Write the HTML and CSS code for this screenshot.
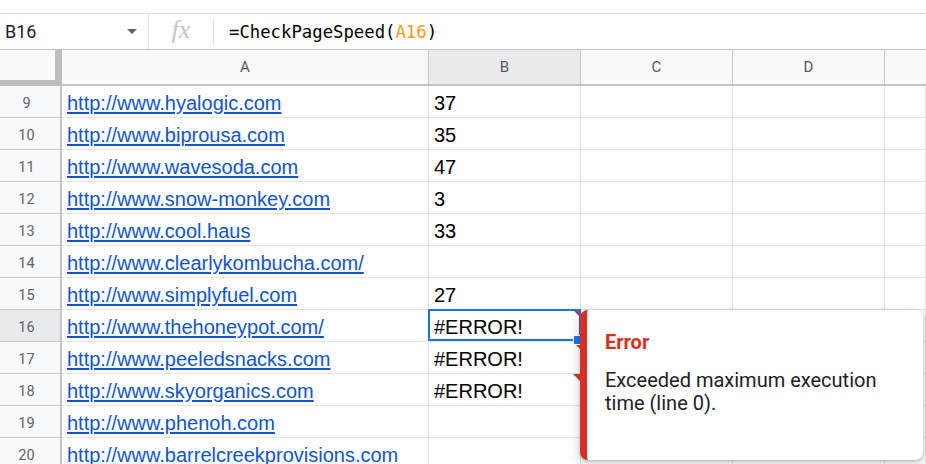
FILE: index.html
```html
<!DOCTYPE html>
<html lang="en">
<head>
    <meta charset="UTF-8">
    <title>Sheet</title>
    <link rel="stylesheet" href="styles.css">
</head>
<body>
    <div class="top-strip"></div>

    <div class="formula-bar">
        <div class="name-box">
            <span class="cell-ref">B16</span>
            <span class="caret"></span>
        </div>
        <div class="fx-box"><span class="fx">fx</span></div>
        <div class="formula">=CheckPageSpeed(<span class="ref">A16</span>)</div>
    </div>

    <div class="sheet">
        <div class="hdr corner"></div>
        <div class="hdr">A</div>
        <div class="hdr active">B</div>
        <div class="hdr">C</div>
        <div class="hdr">D</div>
        <div class="hdr last"></div>

        <div class="rownum">9</div>
        <div class="cell"><a href="#">http://www.hyalogic.com</a></div>
        <div class="cell">37</div><div class="cell"></div><div class="cell"></div><div class="cell"></div>

        <div class="rownum">10</div>
        <div class="cell"><a href="#">http://www.biprousa.com</a></div>
        <div class="cell">35</div><div class="cell"></div><div class="cell"></div><div class="cell"></div>

        <div class="rownum">11</div>
        <div class="cell"><a href="#">http://www.wavesoda.com</a></div>
        <div class="cell">47</div><div class="cell"></div><div class="cell"></div><div class="cell"></div>

        <div class="rownum">12</div>
        <div class="cell"><a href="#">http://www.snow-monkey.com</a></div>
        <div class="cell">3</div><div class="cell"></div><div class="cell"></div><div class="cell"></div>

        <div class="rownum">13</div>
        <div class="cell"><a href="#">http://www.cool.haus</a></div>
        <div class="cell">33</div><div class="cell"></div><div class="cell"></div><div class="cell"></div>

        <div class="rownum">14</div>
        <div class="cell"><a href="#">http://www.clearlykombucha.com/</a></div>
        <div class="cell"></div><div class="cell"></div><div class="cell"></div><div class="cell"></div>

        <div class="rownum">15</div>
        <div class="cell"><a href="#">http://www.simplyfuel.com</a></div>
        <div class="cell">27</div><div class="cell"></div><div class="cell"></div><div class="cell"></div>

        <div class="rownum active">16</div>
        <div class="cell"><a href="#">http://www.thehoneypot.com/</a></div>
        <div class="cell error selected">#ERROR!<span class="fill-handle"></span></div>
        <div class="cell"></div><div class="cell"></div><div class="cell"></div>

        <div class="rownum">17</div>
        <div class="cell"><a href="#">http://www.peeledsnacks.com</a></div>
        <div class="cell error">#ERROR!</div>
        <div class="cell"></div><div class="cell"></div><div class="cell"></div>

        <div class="rownum">18</div>
        <div class="cell"><a href="#">http://www.skyorganics.com</a></div>
        <div class="cell error">#ERROR!</div>
        <div class="cell"></div><div class="cell"></div><div class="cell"></div>

        <div class="rownum">19</div>
        <div class="cell"><a href="#">http://www.phenoh.com</a></div>
        <div class="cell"></div><div class="cell"></div><div class="cell"></div><div class="cell"></div>

        <div class="rownum">20</div>
        <div class="cell"><a href="#">http://www.barrelcreekprovisions.com</a></div>
        <div class="cell"></div><div class="cell"></div><div class="cell"></div><div class="cell"></div>

        <!-- error tooltip for B16 -->
        <div class="error-popup">
            <div class="error-title">Error</div>
            <div class="error-msg">Exceeded maximum execution time (line 0).</div>
        </div>
    </div>
</body>
</html>
```
FILE: styles.css
```css
* {
    box-sizing: border-box;
    margin: 0;
    padding: 0;
}

html, body {
    height: 100%;
    overflow: hidden;
    background: #ffffff;
    font-family: 'Roboto', 'Liberation Sans', sans-serif;
    color: #202124;
}

.top-strip {
    height: 14px;
    border-bottom: 1px solid #e0e0e0;
}

/* Formula bar */
.formula-bar {
    display: flex;
    align-items: center;
    height: 36px;
    border-bottom: 1px solid #c4c4c4;
}

.name-box {
    display: flex;
    align-items: center;
    justify-content: space-between;
    width: 149px;
    height: 100%;
    padding: 0 11px 0 5px;
    border-right: 1px solid #e3e3e3;
}

.cell-ref {
    font-size: 18px;
    color: #202124;
}

.caret {
    width: 0;
    height: 0;
    border-left: 5px solid transparent;
    border-right: 5px solid transparent;
    border-top: 5px solid #5f6368;
}

.fx-box {
    display: flex;
    align-items: center;
    justify-content: center;
    width: 65px;
    height: 24px;
    border-right: 1px solid #dadce0;
}

.fx {
    font-family: 'Liberation Serif', serif;
    font-style: italic;
    font-size: 26px;
    color: #c4c4c4;
    margin-top: -4px;
}

.formula {
    padding-left: 15px;
    font-family: 'DejaVu Sans Mono', monospace;
    font-size: 17.3px;
    color: #000000;
}

.formula .ref {
    color: #f4981e;
}

/* Grid */
.sheet {
    position: relative;
    display: grid;
    grid-template-columns: 62px 367px 152px 152px 152px 1fr;
    grid-template-rows: 36px;
    grid-auto-rows: 32px;
}

.hdr {
    display: flex;
    align-items: center;
    justify-content: center;
    background: #f8f9fa;
    border-right: 1px solid #c4c4c4;
    border-bottom: 2px solid #c4c4c4;
    font-size: 15px;
    color: #575a5e;
}

.hdr.active {
    background: #e8eaed;
}

.hdr.last {
    border-right: none;
}

.hdr.corner {
    border-right: 7px solid #bdbdbd;
    border-bottom: 6px solid #bdbdbd;
}

.rownum {
    display: flex;
    align-items: center;
    justify-content: center;
    padding: 3px 7px 0 0;
    background: #f8f9fa;
    border-right: 2px solid #c4c4c4;
    border-bottom: 1px solid #c8c8c8;
    font-size: 14.5px;
    color: #5f6368;
}

.rownum.active {
    background: #e8eaed;
}

.cell {
    position: relative;
    padding: 2px 0 0 5px;
    border-right: 1px solid #e2e2e2;
    border-bottom: 1px solid #e2e2e2;
    font-family: 'Liberation Sans', Arial, sans-serif;
    font-size: 20px;
    line-height: 30px;
    color: #000000;
    white-space: nowrap;
}

.cell a {
    color: #1155cc;
    text-decoration: underline;
    text-decoration-thickness: 2px;
    text-underline-offset: 2px;
}

.cell.error::before {
    content: '';
    position: absolute;
    top: 0;
    right: 0;
    border-left: 7px solid transparent;
    border-top: 7px solid #d93025;
}

.cell.selected::after {
    content: '';
    position: absolute;
    top: -1px;
    left: -1px;
    right: -1px;
    bottom: 0;
    border: 2px solid #1a73e8;
}

.fill-handle {
    position: absolute;
    right: -1px;
    bottom: -4px;
    width: 8px;
    height: 10px;
    background: #1a73e8;
    border: 1px solid #ffffff;
    z-index: 2;
}

/* Error tooltip */
.error-popup {
    position: absolute;
    left: 580px;
    top: 260px;
    width: 343px;
    height: 150px;
    padding: 20px 18px;
    background: #ffffff;
    border-left: 7px solid #d93025;
    border-radius: 8px;
    box-shadow: 0 1px 3px rgba(60, 64, 67, 0.3), 0 4px 10px 3px rgba(60, 64, 67, 0.15);
    z-index: 3;
}

.error-title {
    font-size: 20px;
    font-weight: 700;
    color: #d93025;
    line-height: 24px;
}

.error-msg {
    margin-top: 15px;
    font-size: 20px;
    line-height: 23px;
    color: #202124;
}
```
